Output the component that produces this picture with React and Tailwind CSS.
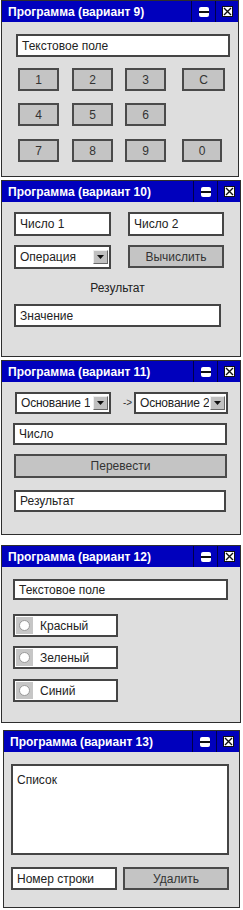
import React from "react";

const font = { fontFamily: '"Liberation Sans", Arial, sans-serif' };

function TitleIcons() {
  return (
    <div className="flex h-full items-stretch">
      <div className="flex w-[24px] items-center justify-center border-l border-[#00004a]">
        <div className="relative h-[10px] w-[10px] rounded-[2px] bg-white">
          <div className="absolute left-0 right-0 top-[4px] h-[2px] bg-[#111]" />
        </div>
      </div>
      <div className="flex w-[23px] items-center justify-center border-l border-[#00004a]">
        <svg width="11" height="11" viewBox="0 0 11 11">
          <rect x="0.5" y="0.5" width="10" height="10" fill="#fff" stroke="#111" strokeWidth="1" />
          <path d="M2 2 L9 9 M9 2 L2 9" stroke="#111" strokeWidth="1.4" />
        </svg>
      </div>
    </div>
  );
}

function Window({ title, className, children }) {
  return (
    <div className={`flex flex-col border border-[#2e2e2e] bg-[#dedede] ${className}`}>
      <div className="flex h-[21px] shrink-0 items-center justify-between bg-[#0000bd] pl-[6px]">
        <span className="text-[12px] font-bold leading-none text-white">{title}</span>
        <TitleIcons />
      </div>
      {children}
    </div>
  );
}

function Field({ className, children }) {
  return (
    <div
      className={`flex items-center border-2 border-[#454545] bg-white px-[4px] text-[12px] leading-none text-[#222] ${className}`}
    >
      {children}
    </div>
  );
}

function Btn({ className, children }) {
  return (
    <div
      className={`flex items-center justify-center border-2 border-[#4a4a4a] bg-[#c4c4c4] text-[12px] leading-none text-[#333] ${className}`}
    >
      {children}
    </div>
  );
}

function Arrow() {
  return (
    <div className="flex h-[14px] w-[15px] shrink-0 items-center justify-center border border-t-[#eee] border-l-[#eee] border-r-[#666] border-b-[#666] bg-[#c0c0c0]">
      <svg width="7" height="4" viewBox="0 0 7 4">
        <path d="M0 0 L7 0 L3.5 4 Z" fill="#111" />
      </svg>
    </div>
  );
}

function Select({ className, children }) {
  return (
    <div
      className={`flex items-center justify-between whitespace-nowrap border-2 border-[#454545] bg-white pl-[4px] pr-[1px] text-[12px] leading-none text-[#222] ${className}`}
    >
      <span className="overflow-hidden">{children}</span>
      <Arrow />
    </div>
  );
}

function Radio({ children }) {
  return (
    <div className="flex h-[23px] w-[105px] items-center border-2 border-[#454545] bg-white text-[12px] leading-none text-[#222]">
      <div className="ml-[1px] flex h-[17px] w-[17px] items-center justify-center bg-[#c6c6c6]">
        <div className="h-[11px] w-[11px] rounded-full border border-[#9a9a9a] bg-white" />
      </div>
      <span className="ml-[7px]">{children}</span>
    </div>
  );
}

export default function App() {
  return (
    <div className="w-[243px] bg-white" style={font}>
      {/* Variant 9 */}
      <Window title="Программа (вариант 9)" className="ml-[1px] h-[177px] w-[238px]">
        <div className="pl-[14px] pt-[12px]">
          <Field className="h-[23px] w-[214px]">Текстовое поле</Field>
          <div className="ml-[2px] mt-[11px] flex">
            <Btn className="h-[23px] w-[41px]">1</Btn>
            <Btn className="ml-[13px] h-[23px] w-[41px]">2</Btn>
            <Btn className="ml-[12px] h-[23px] w-[41px]">3</Btn>
            <Btn className="ml-[16px] h-[23px] w-[43px]">C</Btn>
          </div>
          <div className="ml-[2px] mt-[12px] flex">
            <Btn className="h-[23px] w-[41px]">4</Btn>
            <Btn className="ml-[13px] h-[23px] w-[41px]">5</Btn>
            <Btn className="ml-[12px] h-[23px] w-[41px]">6</Btn>
          </div>
          <div className="ml-[2px] mt-[13px] flex">
            <Btn className="h-[23px] w-[41px]">7</Btn>
            <Btn className="ml-[13px] h-[23px] w-[41px]">8</Btn>
            <Btn className="ml-[12px] h-[23px] w-[41px]">9</Btn>
            <Btn className="ml-[16px] h-[23px] w-[40px]">0</Btn>
          </div>
        </div>
      </Window>

      {/* Variant 10 */}
      <Window title="Программа (вариант 10)" className="ml-[1px] mt-[3px] h-[177px] w-[240px]">
        <div className="pl-[12px] pt-[10px]">
          <div className="flex">
            <Field className="h-[24px] w-[97px]">Число 1</Field>
            <Field className="ml-[17px] h-[24px] w-[96px]">Число 2</Field>
          </div>
          <div className="mt-[9px] flex">
            <Select className="h-[24px] w-[97px]">Операция</Select>
            <Btn className="ml-[17px] h-[23px] w-[96px]">Вычислить</Btn>
          </div>
          <div className="mt-[12px] w-[207px] text-center text-[12px] leading-[14px] text-[#222]">Результат</div>
          <Field className="mt-[9px] h-[23px] w-[207px]">Значение</Field>
        </div>
      </Window>

      {/* Variant 11 */}
      <Window title="Программа (вариант 11)" className="ml-[1px] mt-[3px] h-[175px] w-[240px]">
        <div className="pl-[11px] pt-[10px]">
          <div className="ml-[2px] flex items-center">
            <Select className="h-[22px] w-[96px] tracking-[-0.2px]">Основание 1</Select>
            <span className="ml-[12px] w-[11px] text-[10px] leading-none text-[#333]">-&gt;</span>
            <Select className="h-[22px] w-[94px] tracking-[-0.2px]">Основание 2</Select>
          </div>
          <Field className="mt-[9px] h-[22px] w-[214px]">Число</Field>
          <Btn className="ml-[1px] mt-[9px] h-[24px] w-[213px]">Перевести</Btn>
          <Field className="ml-[1px] mt-[12px] h-[22px] w-[212px]">Результат</Field>
        </div>
      </Window>

      {/* Variant 12 */}
      <Window title="Программа (вариант 12)" className="ml-[1px] mt-[10px] h-[178px] w-[240px]">
        <div className="pl-[11px] pt-[12px]">
          <Field className="h-[21px] w-[215px]">Текстовое поле</Field>
          <div className="mt-[14px]">
            <Radio>Красный</Radio>
          </div>
          <div className="mt-[9px]">
            <Radio>Зеленый</Radio>
          </div>
          <div className="mt-[10px]">
            <Radio>Синий</Radio>
          </div>
        </div>
      </Window>

      {/* Variant 13 */}
      <Window title="Программа (вариант 13)" className="ml-[3px] mt-[7px] h-[178px] w-[237px]">
        <div className="pl-[7px] pt-[12px]">
          <div className="h-[91px] w-[218px] border-2 border-[#454545] bg-white px-[4px] pt-[8px] text-[12px] leading-none text-[#222]">
            Список
          </div>
          <div className="mt-[12px] flex">
            <Field className="h-[23px] w-[106px]">Номер строки</Field>
            <Btn className="ml-[6px] h-[23px] w-[106px]">Удалить</Btn>
          </div>
        </div>
      </Window>
    </div>
  );
}
